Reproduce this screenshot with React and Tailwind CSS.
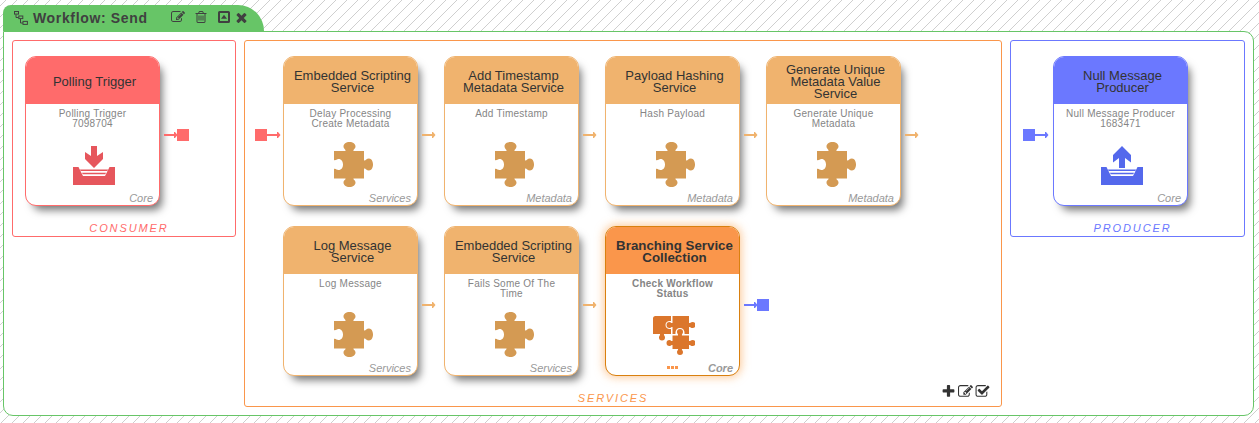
import React from "react";

const EDIT = "M888 1184l116-116-152-152-116 116v56h96v96h56zm440-720q-16-16-33 1l-350 350q-17 17-1 33t33-1l350-350q17-17 1-33zm80 594v190q0 119-84.5 203.5t-203.5 84.5h-832q-119 0-203.5-84.5t-84.5-203.5v-832q0-119 84.5-203.5t203.5-84.5h832q63 0 117 25 15 7 18 23 3 17-9 29l-49 49q-14 14-32 8-23-6-45-6h-832q-66 0-113 47t-47 113v832q0 66 47 113t113 47h832q66 0 113-47t47-113v-126q0-13 9-22l64-64q15-15 35-7t20 29zm-96-738l288 288-672 672h-288v-288zm444 132l-92 92-288-288 92-92q28-28 68-28t68 28l152 152q28 28 28 68t-28 68z";
const CHECK = "M1472 930v318q0 119-84.5 203.5t-203.5 84.5h-832q-119 0-203.5-84.5t-84.5-203.5v-832q0-119 84.5-203.5t203.5-84.5h832q63 0 117 25 15 7 18 23 3 17-9 29l-49 49q-10 10-23 10-3 0-9-2-23-6-45-6h-832q-66 0-113 47t-47 113v832q0 66 47 113t113 47h832q66 0 113-47t47-113v-254q0-13 9-22l64-64q10-10 23-10 6 0 12 3 20 8 20 29zm231-489l-814 814q-24 24-57 24t-57-24l-430-430q-24-24-24-57t24-57l110-110q24-24 57-24t57 24l263 263 647-647q24-24 57-24t57 24l110 110q24 24 24 57t-24 57z";
const PLUS = "M1600 736v192q0 40-28 68t-68 28h-416v416q0 40-28 68t-68 28h-192q-40 0-68-28t-28-68v-416h-416q-40 0-68-28t-28-68v-192q0-40 28-68t68-28h416v-416q0-40 28-68t68-28h192q40 0 68 28t28 68v416h416q40 0 68 28t28 68z";
const TIMES = "M1490 1322q0 40-28 68l-136 136q-28 28-68 28t-68-28l-294-294-294 294q-28 28-68 28t-68-28l-136-136q-28-28-28-68t28-68l294-294-294-294q-28-28-28-68t28-68l136-136q28-28 68-28t68 28l294 294 294-294q28-28 68-28t68 28l136 136q28 28 28 68t-28 68l-294 294 294 294q28 28 28 68z";
const TRASH = "M704 736v576q0 14-9 23t-23 9h-64q-14 0-23-9t-9-23v-576q0-14 9-23t23-9h64q14 0 23 9t9 23zm256 0v576q0 14-9 23t-23 9h-64q-14 0-23-9t-9-23v-576q0-14 9-23t23-9h64q14 0 23 9t9 23zm256 0v576q0 14-9 23t-23 9h-64q-14 0-23-9t-9-23v-576q0-14 9-23t23-9h64q14 0 23 9t9 23zm128 724v-948h-896v948q0 22 7 40.5t14.5 27 10.5 8.5h832q3 0 10.5-8.5t14.5-27 7-40.5zm-672-1076h448l-48-117q-7-9-17-11h-317q-10 2-17 11zm928 32v64q0 14-9 23t-23 9h-96v948q0 83-47 143.5t-113 60.5h-832q-66 0-113-58.5t-47-141.5v-952h-96q-14 0-23-9t-9-23v-64q0-14 9-23t23-9h309l70-167q15-37 54-63t79-26h320q40 0 79 26t54 63l70 167h309q14 0 23 9t9 23z";

function Glyph({ d, className }) {
  return (
    <svg viewBox="0 0 1792 1792" fill="currentColor" className={"block shrink-0 " + className}>
      <path d={d} />
    </svg>
  );
}

function CaretBox() {
  return (
    <svg viewBox="0 0 12 12" className="block h-3 w-3 shrink-0">
      <rect x="1" y="1" width="10" height="10" rx="0.6" fill="none" stroke="currentColor" strokeWidth="2" />
      <path d="M6 3.700L9 7.700H3z" fill="currentColor" />
    </svg>
  );
}

function TreeIcon() {
  return (
    <svg viewBox="0 0 14 14" className="block h-3.5 w-3.5 shrink-0" fill="none" stroke="currentColor">
      <rect x="0.5" y="0.5" width="4" height="2.6" />
      <rect x="4.8" y="5" width="4" height="2.6" />
      <rect x="9" y="10.4" width="4.4" height="3" />
      <path d="M2 3.5v3h2.500M6.500 8v4H9" />
    </svg>
  );
}

function Puzzle() {
  return (
    <svg viewBox="0 0 39 45" className="block h-[45px] w-[39px]" fill="#d49a53">
      <path d="M0 9H11.500C12 7.600 9.500 6.800 9.500 4.500C9.500 1.800 12 0 15.500 0S21.500 1.800 21.500 4.500C21.500 6.800 19 7.600 19.500 9H30V18.300C31.500 19.200 32 16.500 35 16.500C37.500 16.500 39 19.300 39 22.500S37.500 28.500 35 28.500C32 28.500 31.500 25.800 30 26.700V36.500H19.500C19 37.600 21.500 38.200 21.500 40.500C21.500 43.200 19 45 15.500 45S9.500 43.200 9.500 40.500C9.500 38.200 12 37.600 11.500 36.500H0V27C1.500 26 2.500 28 4.500 28C7.500 28 9 25.500 9 22.500S7.500 17 4.500 17C2.500 17 1.500 19 0 18Z" />
    </svg>
  );
}

function Tray({ up, color }) {
  return (
    <svg viewBox="0 0 42 39" className="block h-[39px] w-[42px]" fill={color}>
      {up ? (
        <path d="M21 0L30 9V16.500L24 12V22H18V12L12 16.500V9Z" />
      ) : (
        <path d="M18 0H24V10L30 6V13L21 22L12 13V6L18 10Z" />
      )}
      <path d="M0 21H5.500L10 30H32L36.500 21H42V39H0Z" />
      <path d="M7 23.500H35L34.400 25H7.600ZM9 26.800H33L32.300 28.300H9.700Z" />
    </svg>
  );
}

function PuzzleGroup() {
  return (
    <svg viewBox="0 0 42 39" className="block h-[39px] w-[42px]" fill="#db762c">
      <path d="M2.500 0H18V5C15 4.500 12.500 6 12.500 9S15 13.500 18 13V18H11C10.500 19.500 12 19.500 12 21.500A3 3 0 0 1 6 21.500C6 19.500 7.500 19.500 7 18H0V2.500Q0 0 2.500 0Z" />
      <path d="M19.500 0H36V7C37.500 7.500 37.500 6 39.500 6A3 3 0 0 1 39.500 12C37.500 12 37.500 10.500 36 11V18H31.500C32 14.500 30 12 27 12S22 14.500 22.500 18H19.500V11C18 10.500 18 12 16.500 12A3 3 0 0 1 16.500 6C18 6 18 7.500 19.500 7Z" />
      <path d="M19.500 19.500H25C25.500 18 24 18 24 16A3 3 0 0 1 30 16C30 18 28.500 18 29 19.500H36V25C37.500 25.500 37.500 24 39.500 24A3 3 0 0 1 39.500 30C37.500 30 37.500 28.500 36 29V33H29C28.500 34.500 30 34.500 30 36A3 3 0 0 1 24 36C24 34.500 25.500 34.500 25 33H19.500V29C18 28.500 18 30 16.500 30A3 3 0 0 1 16.500 24C18 24 18 25.500 19.500 25Z" />
    </svg>
  );
}

function Arrow({ color, start, end }) {
  return (
    <div className="flex h-3 items-center" style={{ color }}>
      {start && <span className="block h-3 w-3 bg-current" />}
      <svg viewBox="0 0 14 6" className="block h-1.5 w-3.5" fill="currentColor">
        <path d="M0 2H10V0H11L13.500 3L11 6H10V4H0Z" />
      </svg>
      {end && <span className="-ml-px block h-3 w-3 bg-current" />}
    </div>
  );
}

const themes = {
  red: { border: "border-[#ff6b6b]", head: "bg-[#ff6b6b]" },
  orange: { border: "border-[#f0b36e]", head: "bg-[#f0b36e]" },
  blue: { border: "border-[#6b78ff]", head: "bg-[#6b78ff]" },
  active: { border: "border-[#d9800f]", head: "bg-[#fa964b]" },
};

function Card({ theme, title, lines, tag, icon, more }) {
  const t = themes[theme];
  const active = theme === "active";
  return (
    <div
      className={
        "flex h-[150px] w-[135px] shrink-0 flex-col overflow-hidden rounded-[11px] border bg-white " +
        t.border +
        (active
          ? " font-bold shadow-[0_0_10px_1px_rgba(250,160,75,0.6)]"
          : " shadow-[5px_7px_8px_-3px_rgba(0,0,0,0.55)]")
      }
    >
      <div
        className={
          "flex h-[47px] shrink-0 flex-col items-center justify-center pt-[3px] pl-1 leading-[12px] text-[#333] " +
          (active ? "text-[13.3px] " : "text-[13px] ") +
          t.head
        }
      >
        {title.map((line) => (
          <span key={line} className="whitespace-nowrap">{line}</span>
        ))}
      </div>
      <div className="flex h-[37px] shrink-0 flex-col items-center pt-[5px] text-[10px] leading-[10px] tracking-[0.25px] text-[#858585]">
        {lines.map((line) => (
          <span key={line} className="whitespace-nowrap">{line}</span>
        ))}
      </div>
      <div className="flex grow justify-center pl-[3px]">{icon}</div>
      <div className="flex h-[15px] items-start justify-end pt-0.5 pr-[6px]">
        {more && (
          <div className="mr-[30px] flex gap-px pt-1">
            <span className="h-[3px] w-[3px] bg-[#fa964b]" />
            <span className="h-[3px] w-[3px] bg-[#fa964b]" />
            <span className="h-[3px] w-[3px] bg-[#fa964b]" />
          </div>
        )}
        <span className="text-[11px] leading-[13px] text-[#999] italic">{tag}</span>
      </div>
    </div>
  );
}

function Service({ title, lines, tag }) {
  return (
    <Card theme="orange" title={title} lines={lines} tag={tag} icon={<div className="pt-px pl-0.5"><Puzzle /></div>} />
  );
}

function Link({ children }) {
  return <div className="flex h-[150px] w-[26px] shrink-0 items-center pt-2 pl-1">{children}</div>;
}

function PanelLabel({ children, className }) {
  return (
    <div className={"text-center text-[11px] leading-[13px] tracking-[1.9px] italic " + className}>{children}</div>
  );
}

export default function App() {
  return (
    <div className="flex h-[423px] w-[1259px] flex-col overflow-hidden bg-white bg-[repeating-linear-gradient(135deg,transparent_0,transparent_3.89px,#cfcfcf_3.89px,#cfcfcf_4.6px,transparent_4.6px,transparent_7.7782px)] pt-[5px] pl-[3px] font-['Liberation_Sans',Arial,sans-serif]">
      <header className="flex h-[26px] w-[261px] items-center rounded-tl-[8px] rounded-tr-[26px] bg-[#67c567] pl-[11px] text-[#404040]">
        <TreeIcon />
        <h1 className="ml-[5px] w-[138px] text-[14px] leading-4 font-bold tracking-[0.65px] whitespace-nowrap">Workflow: Send</h1>
        <div className="flex items-center pb-0.5">
          <Glyph d={EDIT} className="h-[14px] w-[14px]" />
          <Glyph d={TRASH} className="ml-[9px] h-[14px] w-[14px]" />
          <div className="ml-[10px]"><CaretBox /></div>
          <Glyph d={TIMES} className="ml-[4px] h-[15px] w-[15px]" />
        </div>
      </header>
      <main className="flex h-[385px] w-[1251px] items-start gap-2 rounded-[10px] rounded-tl-none border border-[#67c567] bg-white pt-2 pl-2">
        <section className="flex h-[197px] w-[224px] shrink-0 flex-col rounded-[3px] border border-[#ff6b6b] pt-[15px]">
          <div className="flex pl-3">
            <Card
              theme="red"
              title={["Polling Trigger"]}
              lines={["Polling Trigger", "7098704"]}
              tag="Core"
              icon={<div className="pt-[5px]"><Tray color="#e6565c" /></div>}
            />
            <Link><Arrow color="#ff6b6b" end /></Link>
          </div>
          <PanelLabel className="mt-4 pl-[10px] text-[#ff6b6b]">CONSUMER</PanelLabel>
        </section>
        <section className="flex h-[367px] w-[758px] shrink-0 flex-col rounded-[3px] border border-[#fa964b] pt-[15px]">
          <div className="flex pl-[9px]">
            <div className="flex h-[150px] w-[29px] shrink-0 items-center pt-2 pl-px">
              <Arrow color="#ff6b6b" start />
            </div>
            <Service title={["Embedded Scripting", "Service"]} lines={["Delay Processing", "Create Metadata"]} tag="Services" />
            <Link><Arrow color="#f0b36e" /></Link>
            <Service title={["Add Timestamp", "Metadata Service"]} lines={["Add Timestamp"]} tag="Metadata" />
            <Link><Arrow color="#f0b36e" /></Link>
            <Service title={["Payload Hashing", "Service"]} lines={["Hash Payload"]} tag="Metadata" />
            <Link><Arrow color="#f0b36e" /></Link>
            <Service title={["Generate Unique", "Metadata Value", "Service"]} lines={["Generate Unique", "Metadata"]} tag="Metadata" />
            <Link><Arrow color="#f0b36e" /></Link>
          </div>
          <div className="mt-5 flex pl-[38px]">
            <Service title={["Log Message", "Service"]} lines={["Log Message"]} tag="Services" />
            <Link><Arrow color="#f0b36e" /></Link>
            <Service title={["Embedded Scripting", "Service"]} lines={["Fails Some Of The", "Time"]} tag="Services" />
            <Link><Arrow color="#f0b36e" /></Link>
            <Card
              theme="active"
              title={["Branching Service", "Collection"]}
              lines={["Check Workflow", "Status"]}
              tag="Core"
              more
              icon={<div className="pt-[5px]"><PuzzleGroup /></div>}
            />
            <Link><Arrow color="#6b78ff" end /></Link>
          </div>
          <div className="relative mt-4">
            <PanelLabel className="pr-5 text-[#fa964b]">SERVICES</PanelLabel>
            <div className="absolute top-[-8px] right-[11px] flex gap-[2px] text-[#333]">
              <Glyph d={PLUS} className="h-[15px] w-[15px]" />
              <Glyph d={EDIT} className="h-[15px] w-[15px]" />
              <Glyph d={CHECK} className="h-[15px] w-[15px]" />
            </div>
          </div>
        </section>
        <section className="flex h-[197px] w-[235px] shrink-0 flex-col rounded-[3px] border border-[#6b78ff] pt-[15px]">
          <div className="flex pl-3">
            <div className="flex h-[150px] w-[30px] shrink-0 items-center pt-2">
              <Arrow color="#6b78ff" start />
            </div>
            <Card
              theme="blue"
              title={["Null Message", "Producer"]}
              lines={["Null Message Producer", "1683471"]}
              tag="Core"
              icon={<div className="pt-[5px]"><Tray up color="#5468ec" /></div>}
            />
          </div>
          <PanelLabel className="mt-4 pl-[10px] text-[#6b78ff]">PRODUCER</PanelLabel>
        </section>
      </main>
    </div>
  );
}
